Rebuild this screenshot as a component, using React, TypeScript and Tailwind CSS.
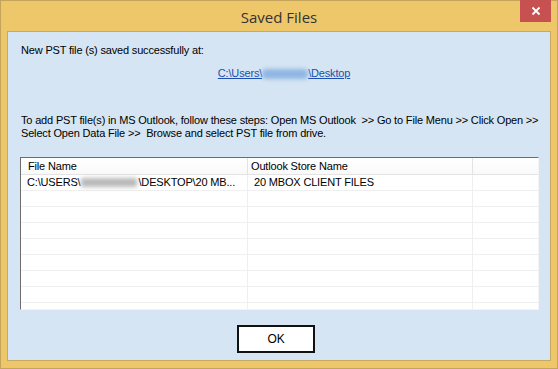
import React from "react";

const rows = [
  { name: "C:\\USERS\\", rest: "\\DESKTOP\\20 MB...", store: "20 MBOX CLIENT FILES" },
  null,
  null,
  null,
  null,
  null,
  null,
  null,
  null,
];

export default function App() {
  return (
    <div
      className="flex h-[369px] w-[558px] flex-col border border-[#c4a35a] bg-[#efc76b] text-black"
      style={{ fontFamily: '"Liberation Sans", Arial, sans-serif' }}
    >
      {/* title bar */}
      <div className="relative flex h-[30px] shrink-0 items-center justify-center">
        <span
          className="pt-[2px] text-[15px] text-[#333]"
          style={{ fontFamily: '"Open Sans", "Noto Sans", sans-serif' }}
        >
          Saved Files
        </span>
        <button className="absolute right-[6px] top-[-1px] flex h-[22px] w-[31px] items-center justify-center bg-[#c75050]">
          <svg width="10" height="10" viewBox="0 0 10 10">
            <path d="M1.5 1.5 L8.5 8.5 M8.5 1.5 L1.5 8.5" stroke="#fff" strokeWidth="1.8" />
          </svg>
        </button>
      </div>

      {/* client area */}
      <div className="mx-[6px] mb-[7px] flex flex-1 flex-col border border-[#c6a964] bg-[#d6e5f3] pl-[12px] pt-[12px] text-[11px] leading-[13px] tracking-[-0.17px]">
        <p className="pl-[1px]">New PST file (s) saved successfully at:</p>

        <div className="mt-[10px] flex justify-center pr-[2px]">
          <a className="flex items-center text-[#1a4fb0] underline">
            C:\Users\
            <span className="inline-block h-[10px] w-[46px] rounded-sm bg-[#8fb6e4] blur-[2px]" />
            \Desktop
          </a>
        </div>

        <p className="mt-[34px] whitespace-nowrap pl-[1px]">
          To add PST file(s) in MS Outlook, follow these steps: Open MS Outlook&nbsp; &gt;&gt; Go to File Menu &gt;&gt; Click Open &gt;&gt;
          <br />
          Select Open Data File &gt;&gt;&nbsp; Browse and select PST file from drive.
        </p>

        {/* list view */}
        <div className="mt-[17px] flex h-[153px] w-[519px] flex-col overflow-hidden border border-b-[#f4f4f4] border-l-[#6d6d6d] border-r-[#f4f4f4] border-t-[#6d6d6d] bg-white">
          <div className="flex h-[17px] shrink-0 border-b border-[#e3e3e3] bg-gradient-to-b from-white to-[#f9f9f9]">
            <div className="w-[227px] border-r border-[#e3e3e3] pl-[7px] pt-[2px]">File Name</div>
            <div className="w-[225px] border-r border-[#e3e3e3] pl-[3px] pt-[2px]">Outlook Store Name</div>
            <div className="flex-1" />
          </div>
          {rows.map((r, i) => (
            <div key={i} className="flex h-[16px] shrink-0 border-b border-[#efefef]">
              <div className="flex w-[227px] items-center border-r border-[#efefef] pl-[6px]">
                {r && (
                  <>
                    {r.name}
                    <span className="mx-[1px] inline-block h-[9px] w-[56px] bg-[#b9b9b9] blur-[2px]" />
                    {r.rest}
                  </>
                )}
              </div>
              <div className="flex w-[225px] items-center border-r border-[#efefef] pl-[6px]">{r && r.store}</div>
              <div className="flex-1" />
            </div>
          ))}
        </div>

        <div className="mt-[15px] pl-[217px]">
          <button className="h-[28px] w-[78px] border-2 border-[#111] bg-white text-[12px] text-black">OK</button>
        </div>
      </div>
    </div>
  );
}
